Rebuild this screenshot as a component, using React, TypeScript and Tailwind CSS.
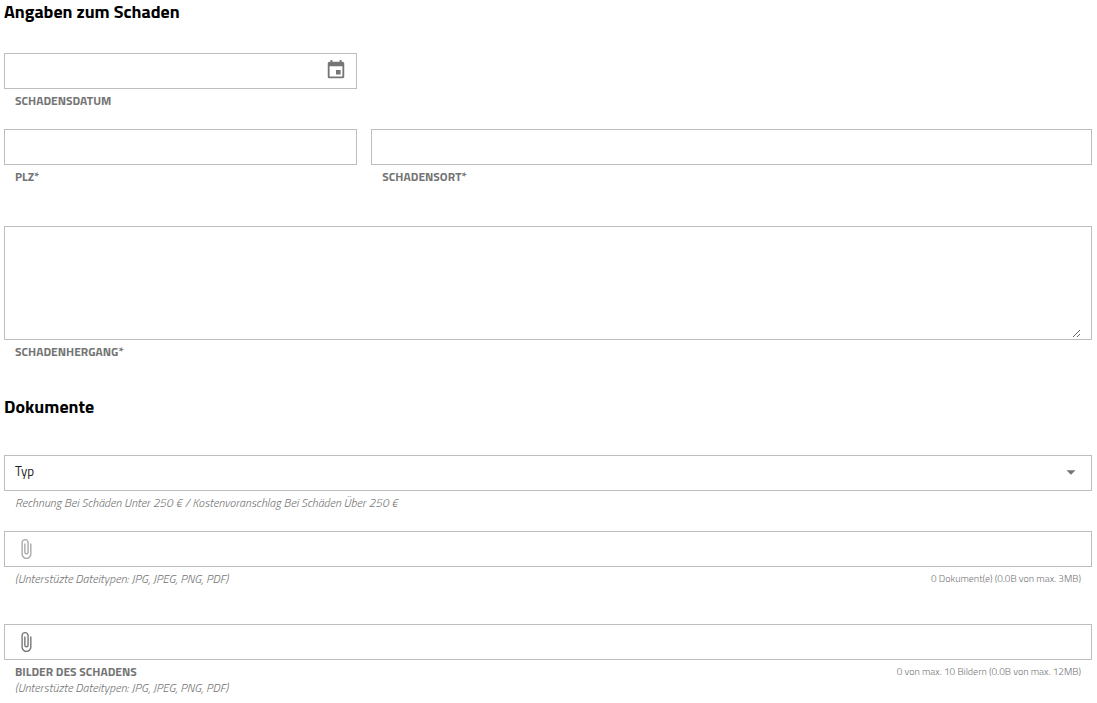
import type { ReactNode } from "react";
import { MdArrowDropDown, MdAttachFile, MdEvent } from "react-icons/md";

const box = "flex w-full border border-[#bdbdbd] bg-white";
const line = "h-9 items-center";
const control = "min-w-0 flex-1 self-stretch bg-transparent px-[10px] text-[13px] text-[#212121] outline-none";

function Caption({ id, children }: { id: string; children: ReactNode }) {
    return (
        <label htmlFor={id} className="mt-1 block px-[11px] text-xs leading-4 font-bold text-[#757575] uppercase">
            {children}
        </label>
    );
}

function TextField({ id, label }: { id: string; label: string }) {
    return (
        <div>
            <div className={`${box} ${line}`}>
                <input id={id} type="text" className={control} />
            </div>
            <Caption id={id}>{label}</Caption>
        </div>
    );
}

interface UploadFieldProps {
    id: string;
    label?: string;
    info: string;
    iconClass: string;
}

function UploadField({ id, label, info, iconClass }: UploadFieldProps) {
    return (
        <div className="relative">
            <label htmlFor={id} className={`${box} ${line} cursor-pointer px-[10px] pb-px`}>
                <MdAttachFile size={22} className={iconClass} />
            </label>
            <input id={id} type="file" multiple aria-label={label ?? "Dokument"} aria-describedby={`${id}-hint`} className="sr-only" />
            <div className="mt-1 flex justify-between px-[11px] text-[#757575]">
                <div className="text-xs leading-4">
                    {label && <label htmlFor={id} className="block font-bold uppercase">{label}</label>}
                    <p id={`${id}-hint`} className="font-light italic">(Unterstüzte Dateitypen: JPG, JPEG, PNG, PDF)</p>
                </div>
                <p className="text-[10px] leading-4 font-light">{info}</p>
            </div>
        </div>
    );
}

export default function App() {
    return (
        <form className="pr-[5px] pl-1 font-['Titillium_Web',Lato,sans-serif]">
            <h2 className="text-lg leading-6 font-bold text-black">Angaben zum Schaden</h2>

            <div className="mt-[29px] grid grid-cols-3 gap-x-[14px] gap-y-5">
                <div>
                    <div className={`${box} ${line}`}>
                        <input id="schadensdatum" type="text" className={control} />
                        <button type="button" aria-label="Datum wählen" className="mr-[9px] mb-[2px] text-[#757575]">
                            <MdEvent size={22} />
                        </button>
                    </div>
                    <Caption id="schadensdatum">Schadensdatum</Caption>
                </div>
                <div className="col-start-1">
                    <TextField id="plz" label="PLZ*" />
                </div>
                <div className="col-span-2">
                    <TextField id="schadensort" label="Schadensort*" />
                </div>
            </div>

            <div className="mt-[41px]">
                <div className={`${box} pr-[10px] pb-px`}>
                    <textarea id="schadenhergang" className={`${control} h-[111px] resize-y py-2`} />
                </div>
                <Caption id="schadenhergang">Schadenhergang*</Caption>
            </div>

            <h2 className="mt-[35px] text-lg leading-6 font-bold text-black">Dokumente</h2>

            <div className="mt-9">
                <div className="grid items-center">
                    <select id="typ" aria-label="Typ" aria-describedby="typ-hint" className="col-start-1 row-start-1 h-9 w-full appearance-none border border-[#bdbdbd] bg-white px-[10px] pb-[2px] text-[13px] text-[#212121]">
                        <option>Typ</option>
                    </select>
                    <MdArrowDropDown size={22} className="pointer-events-none col-start-1 row-start-1 mr-[10px] mb-[2px] justify-self-end text-[#757575]" />
                </div>
                <p id="typ-hint" className="mt-1 px-[11px] text-xs leading-4 font-light text-[#757575] italic">
                    Rechnung Bei Schäden Unter 250 € / Kostenvoranschlag Bei Schäden Über 250 €
                </p>
            </div>

            <div className="mt-5">
                <UploadField id="dokumente" info="0 Dokument(e) (0.0B von max. 3MB)" iconClass="text-[#a8a8a8]" />
            </div>
            <div className="mt-[37px]">
                <UploadField id="bilder" label="Bilder des Schadens" info="0 von max. 10 Bildern (0.0B von max. 12MB)" iconClass="text-[#757575]" />
            </div>
        </form>
    );
}
